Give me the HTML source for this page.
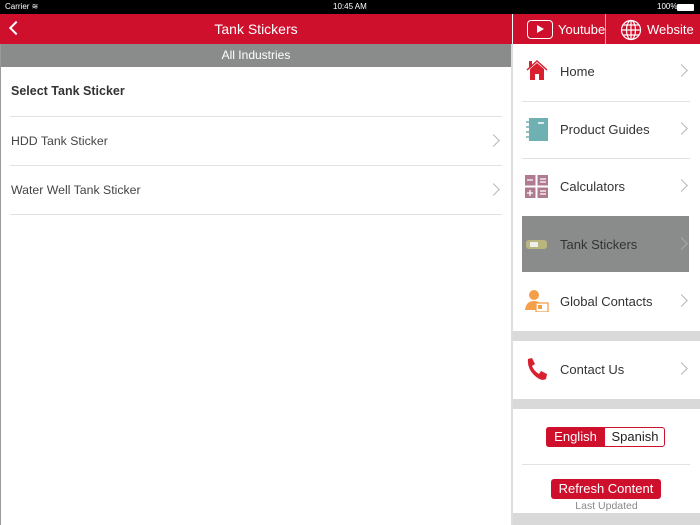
<!DOCTYPE html>
<html><head><style>
*{margin:0;padding:0;box-sizing:border-box}
body{width:700px;height:525px;overflow:hidden;background:#fff;font-family:"Liberation Sans",sans-serif;position:relative}
.a{position:absolute}
.sb{left:0;top:0;width:700px;height:14px;background:#000;color:#fff;font-size:8px}
.red{background:#cf102d}
.sep{height:1px;background:#e3e3e3}
.chev{position:absolute;width:9px;height:9px;border-right:1.5px solid #b5b8bc;border-top:1.5px solid #b5b8bc;transform:rotate(45deg)}
.mi{position:absolute;left:560px;font-size:13px;color:#333}
</style></head><body>
<div class="a sb"><span class="a" style="left:5px;top:2px">Carrier ≋</span><span class="a" style="left:333px;top:2px">10:45 AM</span><span class="a" style="left:657px;top:2px">100%</span><div class="a" style="left:677px;top:4px;width:17px;height:7px;background:#fff;border-radius:1px"></div></div>
<div class="a red" style="left:0;top:14px;width:512px;height:30px"></div>
<div class="a" style="left:11px;top:23px;width:10px;height:10px;border-left:2.5px solid #fff;border-bottom:2.5px solid #fff;transform:rotate(45deg)"></div>
<div class="a" style="left:0;top:21px;width:512px;text-align:center;color:#fff;font-size:14px">Tank Stickers</div>
<div class="a" style="left:0;top:44px;width:512px;height:23px;background:#8a8c8b;color:#fff;font-size:12px;text-align:center;line-height:23px">All Industries</div>
<div class="a" style="left:0;top:44px;width:1px;height:481px;background:#9a9a9a"></div>
<div class="a" style="left:511px;top:44px;width:2px;height:481px;background:#ddd"></div>
<div class="a" style="left:11px;top:84px;font-size:12.5px;font-weight:bold;color:#333">Select Tank Sticker</div>
<div class="a sep" style="left:10px;top:116px;width:492px"></div>
<div class="a" style="left:11px;top:134px;font-size:12.3px;color:#444">HDD Tank Sticker</div>
<div class="chev" style="left:489px;top:136px"></div>
<div class="a sep" style="left:10px;top:165px;width:492px"></div>
<div class="a" style="left:11px;top:183px;font-size:12.3px;color:#444">Water Well Tank Sticker</div>
<div class="chev" style="left:489px;top:185px"></div>
<div class="a sep" style="left:10px;top:214px;width:492px"></div>

<div class="a red" style="left:513px;top:14px;width:187px;height:30px"></div>
<div class="a" style="left:605px;top:14px;width:1px;height:30px;background:#f0a0a8"></div>
<div class="a" style="left:527px;top:20px;width:26px;height:19px;border:1.5px solid #fff;border-radius:4px"></div>
<div class="a" style="left:537px;top:25px;width:0;height:0;border-left:7px solid #fff;border-top:4.5px solid transparent;border-bottom:4.5px solid transparent"></div>
<div class="a" style="left:558px;top:22px;color:#fff;font-size:13px">Youtube</div>
<svg class="a" style="left:620px;top:19px" width="22" height="22" viewBox="0 0 22 22" fill="none" stroke="#fff" stroke-width="1.2"><circle cx="11" cy="11" r="9.5"/><ellipse cx="11" cy="11" rx="4.5" ry="9.5"/><line x1="11" y1="1.5" x2="11" y2="20.5"/><line x1="1.5" y1="11" x2="20.5" y2="11"/><line x1="3" y1="6" x2="19" y2="6"/><line x1="3" y1="16" x2="19" y2="16"/></svg>
<div class="a" style="left:647px;top:22px;color:#fff;font-size:13px">Website</div>

<svg class="a" style="left:526px;top:59px" width="22" height="22" viewBox="0 0 22 22"><path d="M1 11 L11 2 L21 11" fill="none" stroke="#d8202f" stroke-width="1.5"/><rect x="3" y="2" width="3" height="6" fill="#d8202f"/><path d="M4 10 L11 4 L18 10 V21 H13 V15 H9 V21 H4Z" fill="#d8202f"/></svg>
<div class="mi" style="top:64px">Home</div><div class="chev" style="left:677px;top:66px"></div>
<div class="a sep" style="left:522px;top:101px;width:168px"></div>
<svg class="a" style="left:525px;top:117px" width="24" height="25"><rect x="4" y="1" width="19" height="23" fill="#6fb1b3"/><g stroke="#6fb1b3" stroke-width="1.5" fill="none"><path d="M1 5h4M1 10h4M1 15h4M1 20h4"/></g><path d="M13 6h6" stroke="#fff" stroke-width="1.5"/></svg>
<div class="mi" style="top:122px">Product Guides</div><div class="chev" style="left:677px;top:124px"></div>
<div class="a sep" style="left:522px;top:158px;width:168px"></div>
<svg class="a" style="left:525px;top:175px" width="23" height="23"><rect x="0" y="0" width="10.5" height="10.5" fill="#b07a90"/><rect x="12.5" y="0" width="10.5" height="10.5" fill="#b07a90"/><rect x="0" y="12.5" width="10.5" height="10.5" fill="#b07a90"/><rect x="12.5" y="12.5" width="10.5" height="10.5" fill="#b07a90"/><path d="M2 5h6M15 4h6M15 7h6M2 18h6M5 15v6M15 16h6M15 19h6" stroke="#fff" stroke-width="1.3"/></svg>
<div class="mi" style="top:179px">Calculators</div><div class="chev" style="left:677px;top:181px"></div>
<div class="a" style="left:522px;top:216px;width:167px;height:56px;background:#8a8c8b"></div>
<div class="a" style="left:526px;top:240px;width:21px;height:9px;background:#b9b57c;border-radius:3px"></div>
<div class="a" style="left:530px;top:242px;width:8px;height:5px;background:#eee"></div>
<div class="mi" style="top:237px">Tank Stickers</div><div class="chev" style="left:677px;top:239px;border-color:#aaa"></div>
<svg class="a" style="left:525px;top:290px" width="24" height="22"><circle cx="9" cy="5" r="5" fill="#f4a04a"/><path d="M0 20 Q1 11 9 11 Q14 11 16 14 V20Z" fill="#f4a04a"/><rect x="11" y="13" width="12" height="9" fill="#fff" stroke="#f4a04a" stroke-width="1.3"/><rect x="13" y="15" width="4" height="4" fill="#f4a04a"/></svg>
<div class="mi" style="top:294px">Global Contacts</div><div class="chev" style="left:677px;top:296px"></div>
<div class="a" style="left:513px;top:331px;width:187px;height:10px;background:#d9d9d9"></div>
<svg class="a" style="left:525px;top:358px" width="24" height="23"><path d="M3 1 L7 0 L10 6 L7 8 Q9 13 14 16 L16 13 L22 16 L21 21 Q16 24 9 17 Q2 10 3 1Z" fill="#d8202f"/></svg>
<div class="mi" style="top:362px">Contact Us</div><div class="chev" style="left:677px;top:364px"></div>
<div class="a" style="left:513px;top:399px;width:187px;height:10px;background:#d9d9d9"></div>
<div class="a" style="left:546px;top:427px;width:119px;height:20px;border:1px solid #cf102d;border-radius:3px;overflow:hidden"></div>
<div class="a red" style="left:546px;top:427px;width:59px;height:20px;border-radius:3px 0 0 3px;color:#fff;font-size:13px;text-align:center;line-height:20px">English</div>
<div class="a" style="left:605px;top:427px;width:60px;height:20px;color:#222;font-size:13px;text-align:center;line-height:20px">Spanish</div>
<div class="a sep" style="left:522px;top:464px;width:168px"></div>
<div class="a red" style="left:551px;top:479px;width:110px;height:20px;border-radius:3px;color:#fff;font-size:13px;text-align:center;line-height:20px">Refresh Content</div>
<div class="a" style="left:513px;top:500px;width:187px;text-align:center;color:#888;font-size:10.5px">Last Updated</div>
<div class="a" style="left:513px;top:513px;width:187px;height:12px;background:#d9d9d9"></div>
</body></html>
